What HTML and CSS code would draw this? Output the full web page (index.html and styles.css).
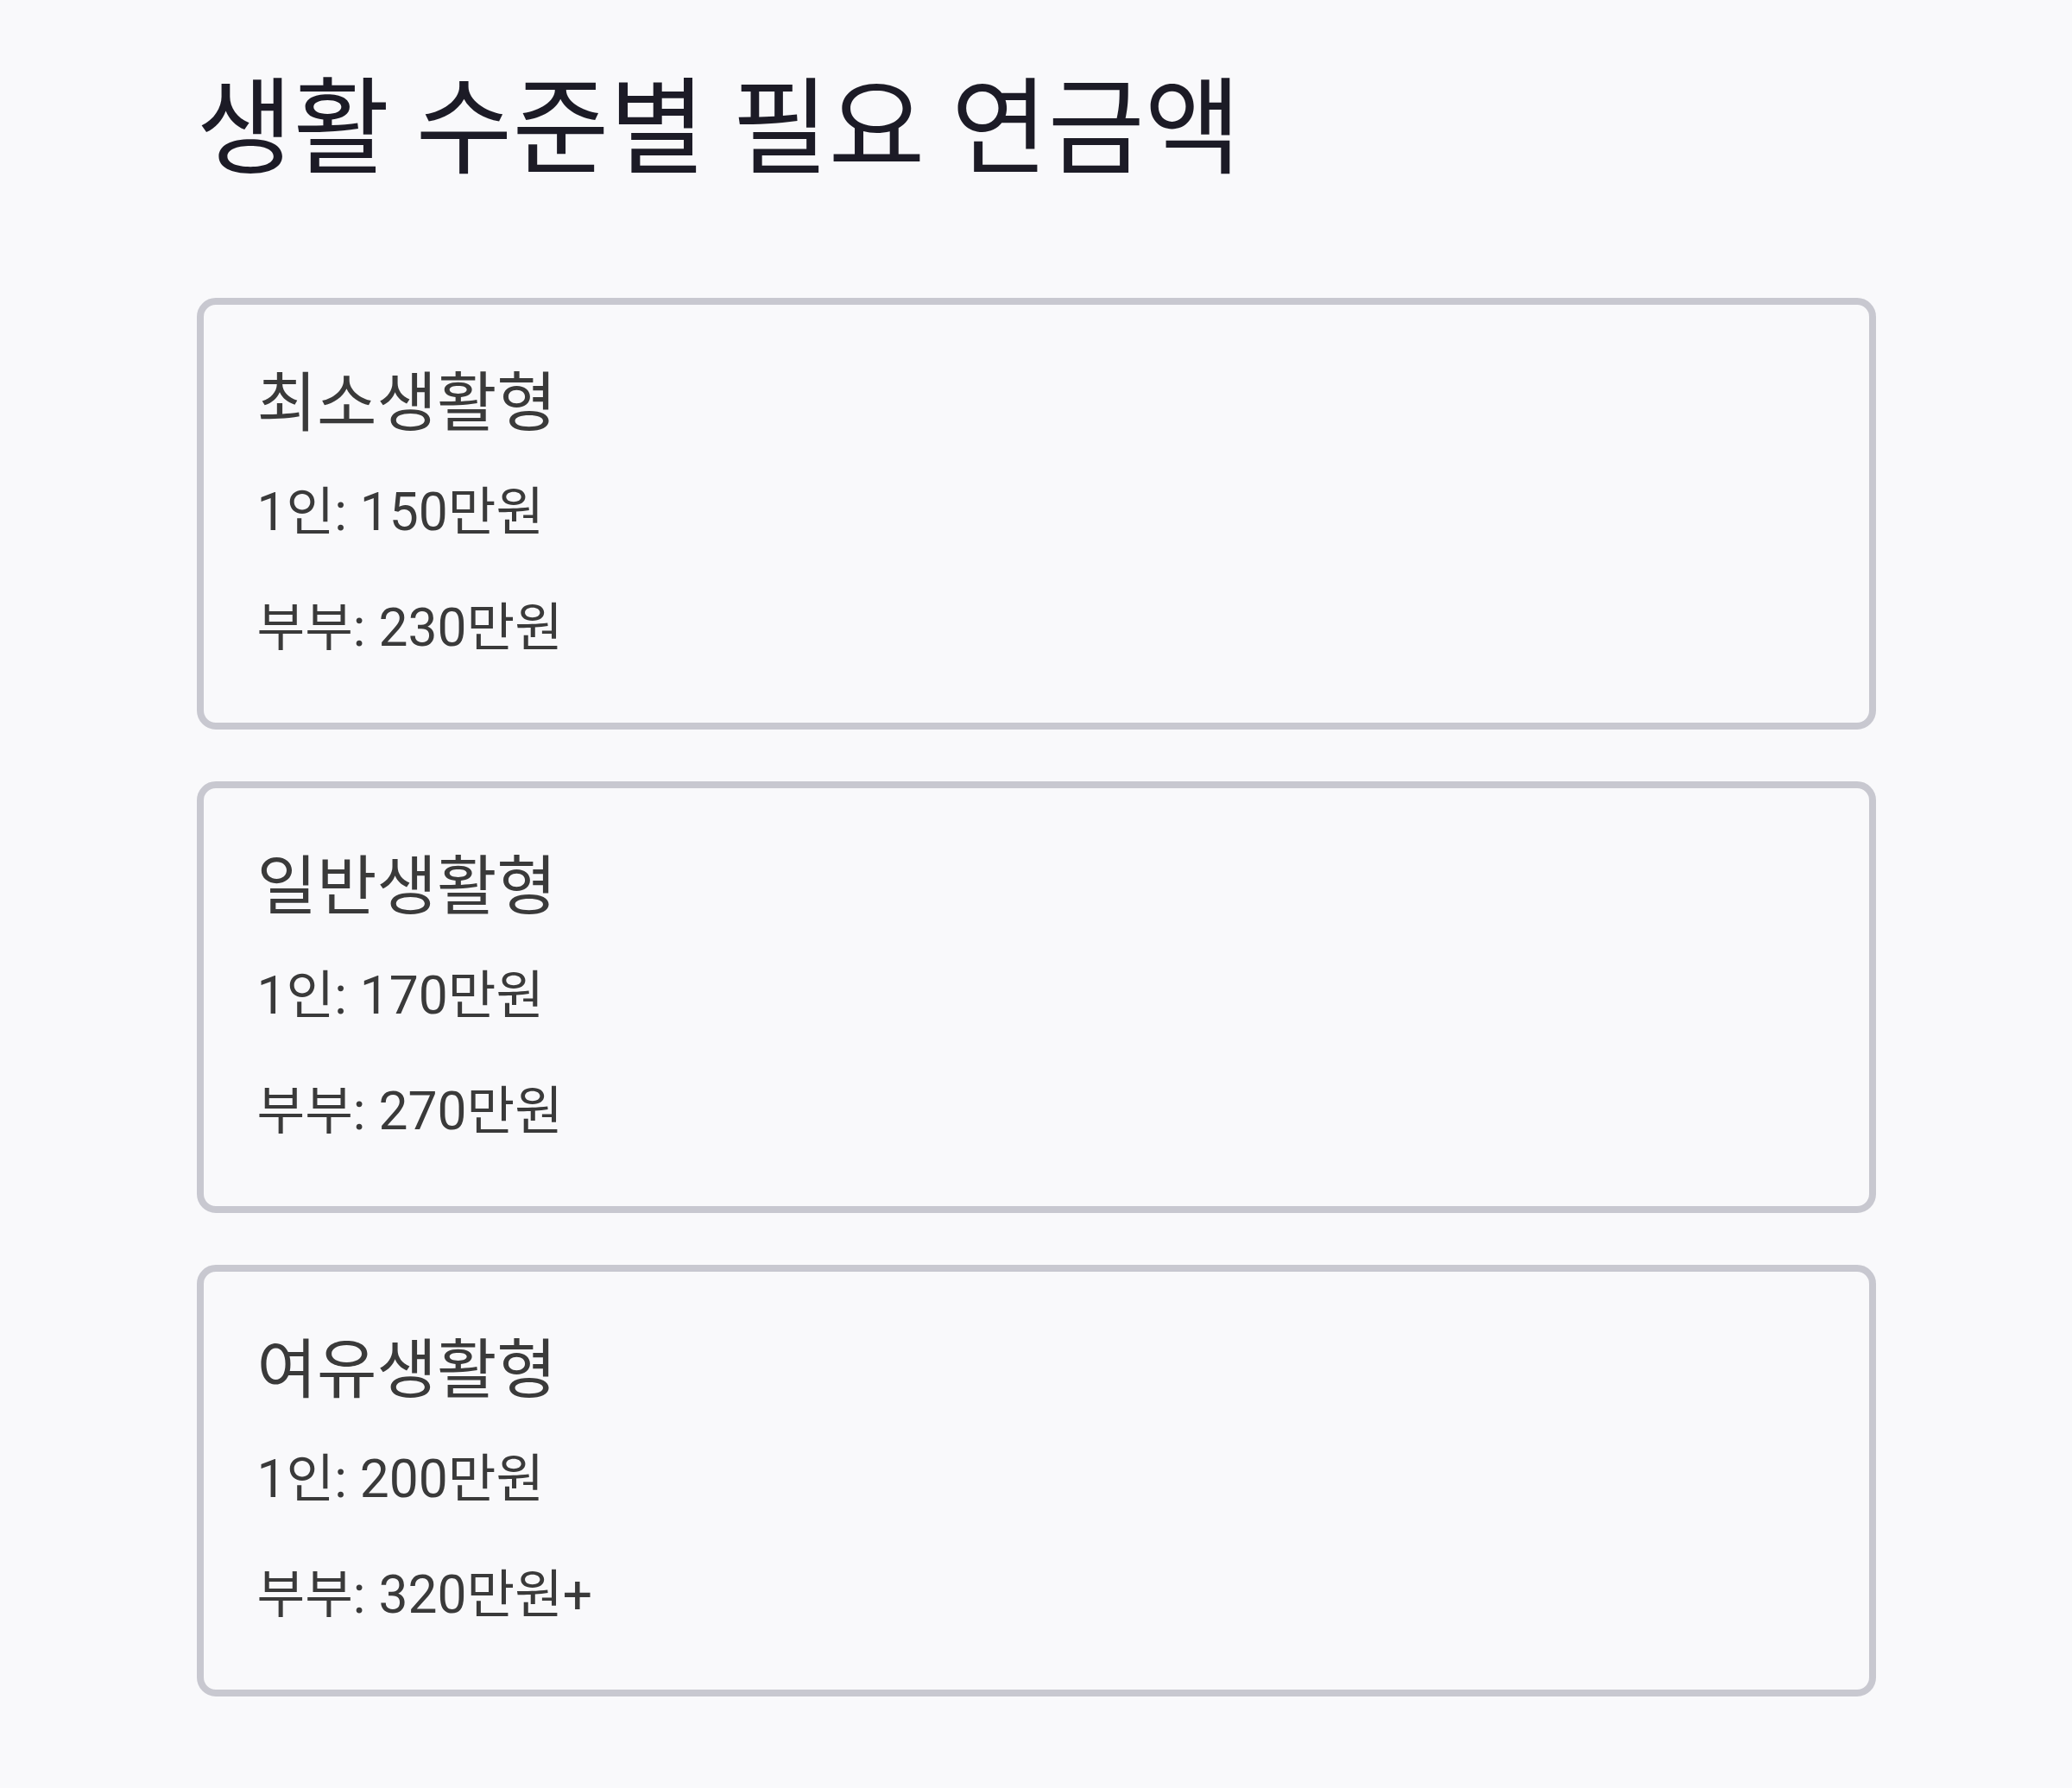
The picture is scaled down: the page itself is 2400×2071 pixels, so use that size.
FILE: index.html
```html
<!DOCTYPE html>
<html lang="ko">
<head>
<meta charset="utf-8">
<title>생활 수준별 필요 연금액</title>
<link rel="stylesheet" href="styles.css">
</head>
<body>
<main class="page">
  <h1 class="page-title">생활 수준별 필요 연금액</h1>
  <section class="levels">
    <article class="level-card">
      <h2 class="level-name">최소생활형</h2>
      <p class="level-row">1인: 150만원</p>
      <p class="level-row">부부: 230만원</p>
    </article>
    <article class="level-card">
      <h2 class="level-name">일반생활형</h2>
      <p class="level-row">1인: 170만원</p>
      <p class="level-row">부부: 270만원</p>
    </article>
    <article class="level-card">
      <h2 class="level-name">여유생활형</h2>
      <p class="level-row">1인: 200만원</p>
      <p class="level-row">부부: 320만원+</p>
    </article>
  </section>
</main>
</body>
</html>
```
FILE: styles.css
```css
html, body {
  margin: 0;
  padding: 0;
  background: #f9f9fb;
}
body {
  font-family: Roboto, "Noto Sans CJK KR", sans-serif;
  color: #3a3a3a;
}
.page {
  width: 1945px;
  margin: 0 auto;
  padding: 77px 0 60px;
}
.page-title {
  margin: 0 0 122px;
  font-size: 121.7px;
  line-height: 146px;
  font-weight: 400;
  color: #1c1b26;
}
.levels {
  display: flex;
  flex-direction: column;
  gap: 60px;
}
.level-card {
  border: 8px solid #c8c8d0;
  border-radius: 22px;
  padding: 66px 62px 64px;
  display: flex;
  flex-direction: column;
}
.level-name {
  margin: 0 0 34px;
  font-size: 75.5px;
  line-height: 96px;
  font-weight: 400;
  color: #3a3a3a;
}
.level-row {
  margin: 0 0 44px;
  font-size: 60.5px;
  line-height: 90px;
}
.level-row:last-child {
  margin-bottom: 0;
}
```
